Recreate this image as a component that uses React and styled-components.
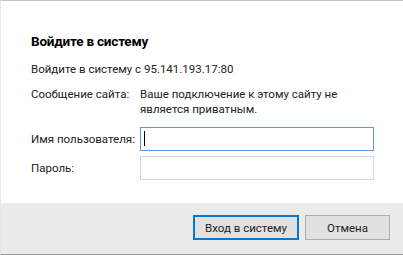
import styled, { createGlobalStyle } from "styled-components";

const GlobalStyle = createGlobalStyle`
  html, body {
    margin: 0;
    padding: 0;
    background: #ffffff;
  }
  * {
    box-sizing: border-box;
  }
`;

const Dialog = styled.div`
  width: 403px;
  height: 255px;
  display: flex;
  flex-direction: column;
  border-top: 1px solid #c4c4c4;
  border-left: 1px solid #e8e8e8;
  border-bottom: 1px solid #9a9a9a;
  font-family: Roboto, "Noto Sans", sans-serif;
  color: #222222;
  background: #ffffff;
`;

const Body = styled.div`
  flex: 1;
  padding: 31px 29px 0 30px;
  display: flex;
  flex-direction: column;
`;

const Title = styled.div`
  font-size: 13.5px;
  font-weight: 700;
  line-height: 18px;
  letter-spacing: -0.2px;
  color: #000000;
`;

const Subtitle = styled.div`
  margin-top: 11px;
  font-size: 11.5px;
  line-height: 16px;
`;

const FormGrid = styled.div`
  margin-top: 10px;
  display: grid;
  grid-template-columns: 109px 1fr;
  row-gap: 5px;
  align-items: center;
`;

const Label = styled.div`
  font-size: 11.5px;
  line-height: 15px;
  white-space: nowrap;
  align-self: ${(p) => (p.$top ? "start" : "center")};
`;

const Message = styled.div`
  font-size: 11.5px;
  line-height: 15px;
  margin-bottom: 5px;
`;

const Field = styled.div`
  position: relative;
  height: 24px;
  border: 1px solid ${(p) => (p.$focused ? "#5a9ae6" : "#d6d6d6")};
  background: #ffffff;

  &::before {
    content: "";
    display: ${(p) => (p.$focused ? "block" : "none")};
    position: absolute;
    left: 3px;
    top: 3px;
    width: 1px;
    height: 15px;
    background: #000000;
  }
`;

const Footer = styled.div`
  height: 51px;
  background: #ebebeb;
  display: flex;
  justify-content: flex-end;
  align-items: center;
  gap: 6px;
  padding: 0 13px 2px 0;
`;

const Button = styled.button`
  height: 25px;
  width: ${(p) => p.$width}px;
  padding: 0;
  font-family: Roboto, "Noto Sans", sans-serif;
  font-size: 11.5px;
  color: #222222;
  background: #e1e1e1;
  border: ${(p) => (p.$primary ? "2px solid #0078d7" : "1px solid #adadad")};
  cursor: default;
`;

export default function App() {
  return (
    <>
      <GlobalStyle />
      <Dialog>
        <Body>
          <Title>Войдите в систему</Title>
          <Subtitle>Войдите в систему с 95.141.193.17:80</Subtitle>
          <FormGrid>
            <Label $top>Сообщение сайта:</Label>
            <Message>
              Ваше подключение к этому сайту не
              <br />
              является приватным.
            </Message>
            <Label>Имя пользователя:</Label>
            <Field $focused />
            <Label>Пароль:</Label>
            <Field />
          </FormGrid>
        </Body>
        <Footer>
          <Button $primary $width={106}>
            Вход в систему
          </Button>
          <Button $width={85}>Отмена</Button>
        </Footer>
      </Dialog>
    </>
  );
}
